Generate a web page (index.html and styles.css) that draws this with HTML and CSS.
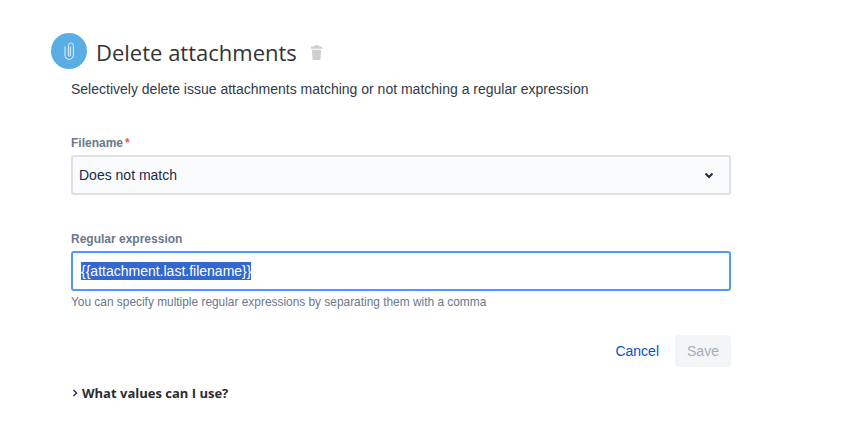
FILE: index.html
```html
<!DOCTYPE html>
<html lang="en">
<head>
<meta charset="utf-8">
<title>Delete attachments</title>
<link rel="stylesheet" href="styles.css">
</head>
<body>
<main class="page">
  <header class="head">
    <span class="badge">
      <svg width="11" height="18" viewBox="0 0 11 18" fill="none" stroke="#e4f2fb" stroke-width="1" stroke-linecap="round"><path d="M1 5v8.200a4.200 4.200 0 0 0 8.400 0V3.500a2.500 2.500 0 0 0-5 0v9.500a1 1 0 0 0 2 0V5"/></svg>
    </span>
    <h1 class="title">Delete attachments</h1>
    <svg class="trash" width="13" height="15" viewBox="0 0 14 16" fill="#cfcfcf"><path d="M5 0h4l.6 1.500H13V4H1V1.500h3.400zM2 5h10l-.7 10.200a.8.8 0 0 1-.8.800h-7a.8.8 0 0 1-.8-.8z"/></svg>
  </header>
  <div class="content">
    <p class="desc">Selectively delete issue attachments matching or not matching a regular expression</p>
    <div class="field first">
      <div class="label">Filename<span class="req">*</span></div>
      <div class="select">
        <span>Does not match</span>
        <svg width="12" height="12" viewBox="0 0 12 12" fill="none" stroke="#172b4d" stroke-width="2"><path d="M2.500 4.500 6 8l3.500-3.500"/></svg>
      </div>
    </div>
    <div class="field second">
      <div class="label">Regular expression</div>
      <div class="input"><span class="selected">{{attachment.last.filename}}</span></div>
      <div class="help">You can specify multiple regular expressions by separating them with a comma</div>
    </div>
    <div class="actions">
      <a class="cancel">Cancel</a>
      <button class="save" type="button" disabled>Save</button>
    </div>
    <div class="more">
      <svg width="8" height="10" viewBox="0 0 8 10" fill="none" stroke="#253858" stroke-width="1.500"><path d="M2.500 2 5.500 5l-3 3"/></svg>
      <span>What values can I use?</span>
    </div>
  </div>
</main>
</body>
</html>
```
FILE: styles.css
```css
* { box-sizing: border-box; }
html, body { margin: 0; background: #fff; }
body { width: 862px; height: 431px; overflow: hidden; font-family: "Liberation Sans", Arial, sans-serif; color: #172b4d; }
.page { padding: 33px 0 0 51px; width: 731px; }
.head { display: flex; align-items: center; height: 36px; }
.badge { width: 36px; height: 36px; border-radius: 50%; background: #5aaee4; display: flex; align-items: center; justify-content: center; }
.title { margin: 2px 0 0 9px; font: 400 22px/36px "Open Sans", sans-serif; color: #333; }
.trash { margin: 3px 0 0 13px; }
.content { padding-left: 20px; }
.desc { margin: 10px 0 0; font-size: 14px; line-height: 20px; color: #2f3a4c; height: 20px; }
.field.first { margin-top: 36px; }
.field.second { margin-top: 36px; }
.label { font-size: 12px; font-weight: 700; line-height: 16px; color: #6b778c; }
.req { color: #ff5630; margin-left: 2px; }
.select { margin-top: 4px; height: 40px; border: 2px solid #dfe1e6; border-radius: 3px; background: #fafbfc; display: flex; align-items: center; justify-content: space-between; padding: 0 14px 0 6px; font-size: 14px; color: #172b4d; }
.input { margin-top: 4px; height: 40px; border: 2px solid #4c9aff; border-radius: 3px; background: #fff; display: flex; align-items: center; padding: 0 8px; font-size: 14px; }
.selected { background: #3367d1; color: #fff; line-height: 18px; }
.help { margin-top: 3px; font-size: 11.900px; line-height: 16px; color: #6b778c; }
.actions { display: flex; justify-content: flex-end; align-items: center; gap: 16px; margin-top: 25px; }
.cancel { color: #0052cc; font-size: 14px; }
.save { width: 56px; height: 32px; border: 0; border-radius: 3px; background: #f4f5f7; color: #a5adba; font: 400 14px "Liberation Sans", Arial, sans-serif; padding: 0; }
.more { display: flex; align-items: center; gap: 3px; margin-top: 16px; font: 700 13px/20px "Open Sans", sans-serif; color: #2b2b33; }
```
